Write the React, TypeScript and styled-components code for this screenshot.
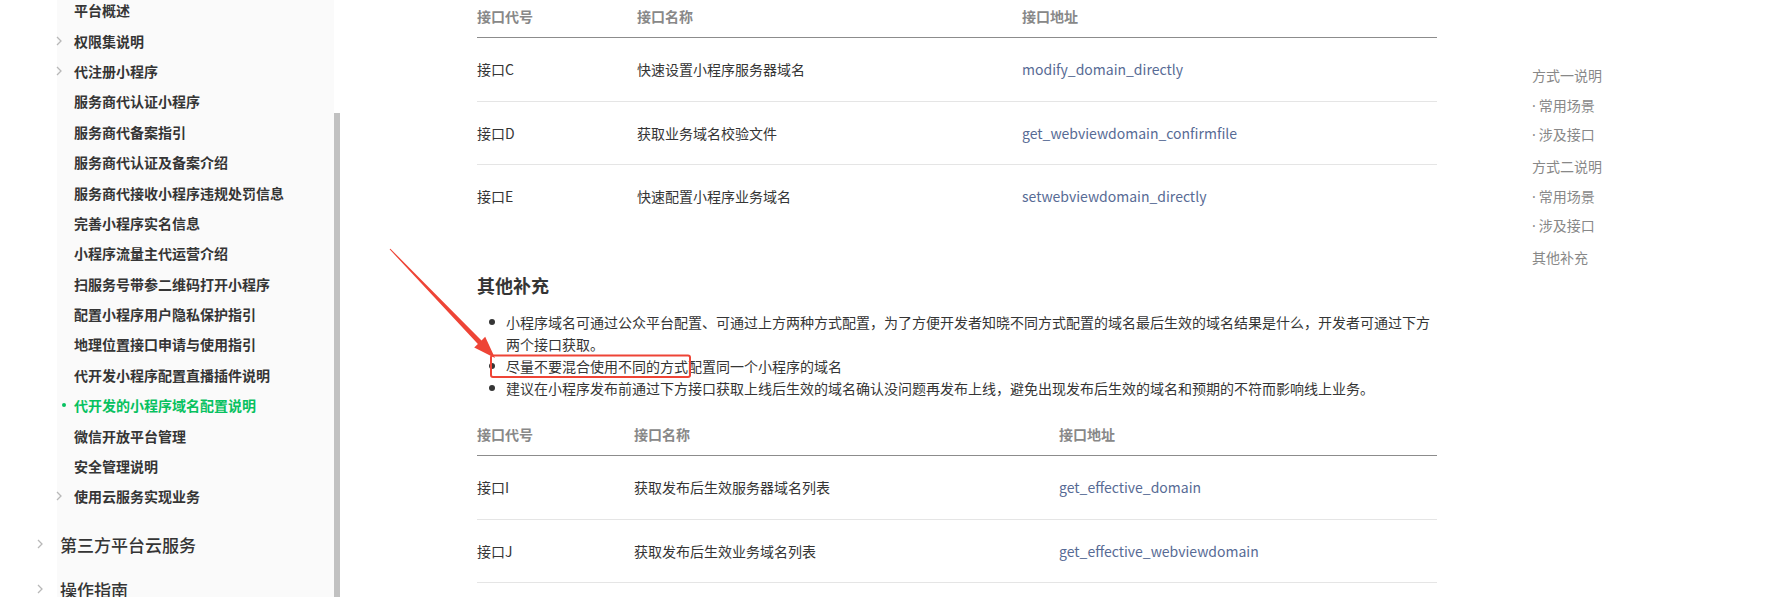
import React from "react";
import styled, { createGlobalStyle } from "styled-components";

const GlobalStyle = createGlobalStyle`
  html, body {
    margin: 0;
    padding: 0;
    background: #fff;
  }
  body {
    width: 1769px;
    height: 597px;
    overflow: hidden;
    font-family: "Noto Sans CJK SC", "Noto Sans", sans-serif;
    color: #353535;
  }
`;

const Page = styled.div`
  position: relative;
  display: flex;
  width: 1769px;
  height: 597px;
  overflow: hidden;
`;

// Left navigation
const Sidebar = styled.aside`
  display: flex;
  flex: none;
  width: 340px;
  height: 597px;
`;

const NavScroll = styled.nav`
  width: 334px;
  background: linear-gradient(to right, #fff 57px, #fafafa 57px);
  overflow: hidden;
`;

const NavList = styled.ul`
  list-style: none;
  margin: -5px 0 0;
  padding: 0;
`;

const NavItem = styled.li<{ $active?: boolean }>`
  display: flex;
  align-items: center;
  height: 30.4px;
  padding-left: 56px;
  font-size: 14px;
  font-weight: 700;
  color: ${(p) => (p.$active ? "#07c160" : "#353535")};
  white-space: nowrap;
`;

const Marker = styled.span<{ $wide?: boolean }>`
  display: flex;
  align-items: center;
  flex: none;
  width: ${(p) => (p.$wide ? "23px" : "18px")};
`;

const Dot = styled.i`
  width: 4px;
  height: 4px;
  margin-left: 6px;
  border-radius: 50%;
  background: #07c160;
`;

const SectionList = styled.ul`
  list-style: none;
  margin: 10px 0 0;
  padding: 0;
`;

const SectionItem = styled.li`
  display: flex;
  align-items: center;
  height: 45px;
  padding-left: 37px;
  font-size: 17px;
  font-weight: 500;
  color: #353535;
  white-space: nowrap;
`;

const ScrollTrack = styled.div`
  display: flex;
  flex-direction: column;
  width: 6px;
  padding-top: 113px;
  box-sizing: border-box;
`;

const Thumb = styled.div`
  flex: 1;
  background: #c1c1c1;
`;

// Main article
const Main = styled.main`
  flex: none;
  width: 960px;
  margin-left: 137px;
`;

const Table = styled.div<{ $top: number }>`
  margin-top: ${(p) => p.$top}px;
`;

const Row = styled.div<{ $cols: string; $head?: boolean; $last?: boolean }>`
  display: grid;
  grid-template-columns: ${(p) => p.$cols};
  align-items: center;
  box-sizing: border-box;
  height: ${(p) => (p.$head ? "43px" : "63.5px")};
  padding-bottom: ${(p) => (p.$head ? "1px" : "0")};
  border-bottom: 1px solid
    ${(p) => (p.$head ? "#8c8c8c" : p.$last ? "transparent" : "#e5e5e5")};
  font-size: 14px;
  line-height: 20px;
  font-weight: ${(p) => (p.$head ? 700 : 400)};
  color: ${(p) => (p.$head ? "#888" : "#353535")};
`;

const Api = styled.span`
  color: #576b95;
`;

const Heading = styled.h3`
  margin: 42.5px 0 0;
  font-size: 18px;
  line-height: 28px;
  font-weight: 700;
  color: #353535;
`;

const Bullets = styled.ul`
  list-style: none;
  margin: 12px 0 0;
  padding-left: 29px;
  font-size: 14px;
  line-height: 22px;
  color: #353535;
`;

const Bullet = styled.li`
  position: relative;
  &::before {
    content: "";
    position: absolute;
    left: -17px;
    top: 8px;
    width: 6px;
    height: 6px;
    border-radius: 50%;
    background: #353535;
  }
`;

// Right table of contents
const Toc = styled.ul`
  list-style: none;
  flex: none;
  margin: 61px 0 0 95px;
  padding: 0;
  font-size: 14px;
  color: #888;
`;

const TocItem = styled.li<{ $sub?: boolean }>`
  height: 29.5px;
  line-height: 29.5px;
  margin-top: ${(p) => (p.$sub ? "0" : "2.5px")};
  white-space: nowrap;
  &:first-child {
    margin-top: 0;
  }
`;

const TocDot = styled.span`
  font-family: "Noto Sans", sans-serif;
  margin-right: 3px;
`;

const Overlay = styled.svg`
  position: absolute;
  left: 0;
  top: 0;
  pointer-events: none;
`;

const Chevron = ({ color = "#b8b8b8" }: { color?: string }) => (
  <svg width="6" height="10" viewBox="0 0 6 10">
    <path d="M1 1l4 4-4 4" fill="none" stroke={color} strokeWidth="1.3" />
  </svg>
);

const NAV = [
  { name: "平台概述" },
  { name: "权限集说明", more: true },
  { name: "代注册小程序", more: true },
  { name: "服务商代认证小程序" },
  { name: "服务商代备案指引" },
  { name: "服务商代认证及备案介绍" },
  { name: "服务商代接收小程序违规处罚信息" },
  { name: "完善小程序实名信息" },
  { name: "小程序流量主代运营介绍" },
  { name: "扫服务号带参二维码打开小程序" },
  { name: "配置小程序用户隐私保护指引" },
  { name: "地理位置接口申请与使用指引" },
  { name: "代开发小程序配置直播插件说明" },
  { name: "代开发的小程序域名配置说明", active: true },
  { name: "微信开放平台管理" },
  { name: "安全管理说明" },
  { name: "使用云服务实现业务", more: true },
];

const SECTIONS = ["第三方平台云服务", "操作指南"];

const TABLE_ONE = [
  ["接口C", "快速设置小程序服务器域名", "modify_domain_directly"],
  ["接口D", "获取业务域名校验文件", "get_webviewdomain_confirmfile"],
  ["接口E", "快速配置小程序业务域名", "setwebviewdomain_directly"],
];

const TABLE_TWO = [
  ["接口I", "获取发布后生效服务器域名列表", "get_effective_domain"],
  ["接口J", "获取发布后生效业务域名列表", "get_effective_webviewdomain"],
];

const TOC = [
  { name: "方式一说明" },
  { name: "常用场景", sub: true },
  { name: "涉及接口", sub: true },
  { name: "方式二说明" },
  { name: "常用场景", sub: true },
  { name: "涉及接口", sub: true },
  { name: "其他补充" },
];

const ApiTable = ({ rows, cols, top }: { rows: string[][]; cols: string; top: number }) => (
  <Table $top={top}>
    <Row $cols={cols} $head>
      <span>接口代号</span>
      <span>接口名称</span>
      <span>接口地址</span>
    </Row>
    {rows.map((r, i) => (
      <Row key={r[0]} $cols={cols} $last={top < 0 && i === rows.length - 1}>
        <span>{r[0]}</span>
        <span>{r[1]}</span>
        <Api>{r[2]}</Api>
      </Row>
    ))}
  </Table>
);

const App = () => {
  return (
    <Page>
      <GlobalStyle />
      <Sidebar>
        <NavScroll>
          <NavList>
            {NAV.map((item) => (
              <NavItem key={item.name} $active={item.active}>
                <Marker>
                  {item.more && <Chevron />}
                  {item.active && <Dot />}
                </Marker>
                {item.name}
              </NavItem>
            ))}
          </NavList>
          <SectionList>
            {SECTIONS.map((name) => (
              <SectionItem key={name}>
                <Marker $wide>
                  <Chevron />
                </Marker>
                {name}
              </SectionItem>
            ))}
          </SectionList>
        </NavScroll>
        <ScrollTrack>
          <Thumb />
        </ScrollTrack>
      </Sidebar>

      <Main>
        <ApiTable rows={TABLE_ONE} cols="160px 385px 1fr" top={-5} />
        <Heading>其他补充</Heading>
        <Bullets>
          <Bullet>
            小程序域名可通过公众平台配置、可通过上方两种方式配置，为了方便开发者知晓不同方式配置的域名最后生效的域名结果是什么，开发者可通过下方两个接口获取。
          </Bullet>
          <Bullet>尽量不要混合使用不同的方式配置同一个小程序的域名</Bullet>
          <Bullet>
            建议在小程序发布前通过下方接口获取上线后生效的域名确认没问题再发布上线，避免出现发布后生效的域名和预期的不符而影响线上业务。
          </Bullet>
        </Bullets>
        <ApiTable rows={TABLE_TWO} cols="157px 425px 1fr" top={14} />
      </Main>

      <Toc>
        {TOC.map((item, i) => (
          <TocItem key={i} $sub={item.sub}>
            {item.sub && <TocDot>·</TocDot>}
            {item.name}
          </TocItem>
        ))}
      </Toc>

      <Overlay width="1769" height="597" viewBox="0 0 1769 597">
        <polygon
          points="389.6,249.3 477.9,343.9 474.2,347.6 495,358 485.2,336.8 481.5,340.5 390.4,248.7"
          fill="#ee4436"
        />
        <rect x="491" y="355.5" width="199" height="21.5" rx="2" fill="none" stroke="#ee4436" strokeWidth="2" />
      </Overlay>
    </Page>
  );
};

export default App;
